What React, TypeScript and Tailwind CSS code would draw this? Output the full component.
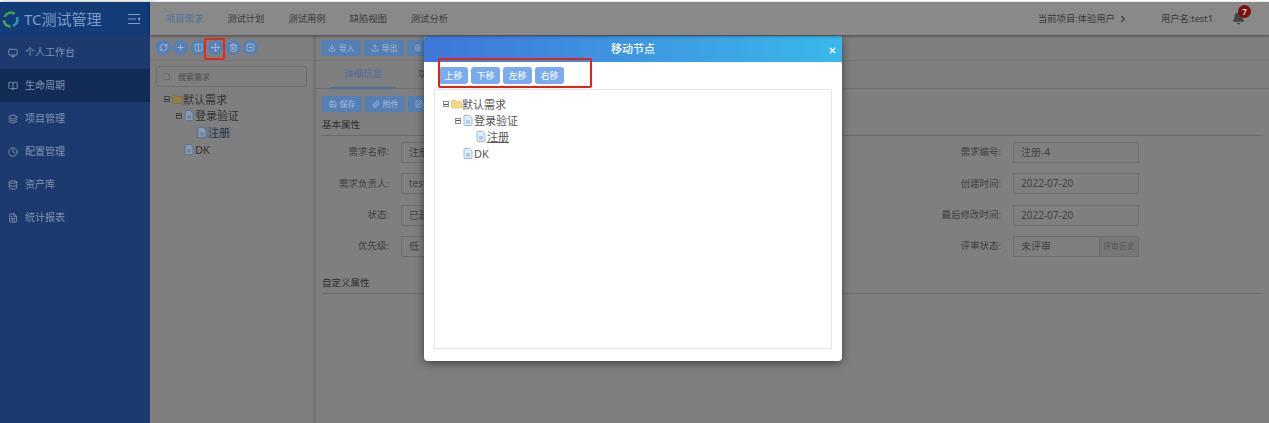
import { Monitor, BookOpen, Layers, Clock, Database, FileText, RefreshCw, Plus, Columns2, Move, Trash2, SquareArrowRight, Download, Upload, Settings, Search, Save, Paperclip, SquarePen, Bell, ChevronRight, X } from "lucide-react";
import type { ComponentType } from "react";

type IconType = ComponentType<{ size?: number; className?: string; strokeWidth?: number }>;

const menus: { label: string; icon: IconType; active?: boolean }[] = [
  { label: "个人工作台", icon: Monitor },
  { label: "生命周期", icon: BookOpen, active: true },
  { label: "项目管理", icon: Layers },
  { label: "配置管理", icon: Clock },
  { label: "资产库", icon: Database },
  { label: "统计报表", icon: FileText },
];

const navs = ["项目需求", "测试计划", "测试用例", "缺陷视图", "测试分析"];
const circles: IconType[] = [RefreshCw, Plus, Columns2, Move, Trash2, SquareArrowRight];

const rows = [
  ["需求名称:", "注册", "需求编号:", "注册-4"],
  ["需求负责人:", "test1", "创建时间:", "2022-07-20"],
  ["状态:", "已建立", "最后修改时间:", "2022-07-20"],
  ["优先级:", "低", "评审状态:", "未评审"],
];

function Logo() {
  return (
    <svg width="17" height="17" viewBox="0 0 20 20" fill="none" strokeWidth="3.2">
      <path d="M3 7 A8 8 0 0 1 15 3.5" stroke="#3f9a4e" />
      <path d="M17.5 7 A8 8 0 0 1 13 17.5" stroke="#2f8fb0" />
      <path d="M10 18 A8 8 0 0 1 2 11" stroke="#4aa35a" />
    </svg>
  );
}

function FolderIcon({ dim }: { dim?: boolean }) {
  return (
    <svg width="11" height="10" viewBox="0 0 11 10" className="shrink-0">
      <path d="M0.5 2 Q0.5 1 1.5 1 H4 L5 2.2 H9.5 Q10.5 2.2 10.5 3.2 V8 Q10.5 9 9.5 9 H1.5 Q0.5 9 0.5 8 Z" fill={dim ? "#8f8047" : "#f3d987"} stroke={dim ? "#6f6338" : "#d9b95c"} strokeWidth="0.6" />
    </svg>
  );
}

function FileIcon({ dim }: { dim?: boolean }) {
  return (
    <svg width="10" height="11" viewBox="0 0 10 11" className="shrink-0">
      <path d="M1 1.2 Q1 0.5 1.7 0.5 H6.5 L9 3 V9.8 Q9 10.5 8.3 10.5 H1.7 Q1 10.5 1 9.8 Z" fill={dim ? "#8b99ad" : "#e4eefb"} stroke={dim ? "#4d6f9e" : "#86aee2"} strokeWidth="0.8" />
      <path d="M3 6 H7 M3 7.8 H7" stroke={dim ? "#4d6f9e" : "#6d9bd8"} strokeWidth="0.8" />
    </svg>
  );
}

function Toggle({ dim }: { dim?: boolean }) {
  return (
    <span className={`flex h-[6px] w-[6px] shrink-0 items-center justify-center border ${dim ? "border-[#4a4a4a]" : "border-[#8a8f96] bg-[#eef1f5]"}`}>
      <span className={`h-px w-[4px] ${dim ? "bg-[#333]" : "bg-[#555]"}`} />
    </span>
  );
}

function Tree({ dim }: { dim?: boolean }) {
  const text = dim ? "text-[#333]" : "text-[#555]";
  const rowH = dim ? "h-[16.6px]" : "h-[16.4px]";
  return (
    <div className={`flex flex-col text-[11px] leading-none ${text}`}>
      <div className={`flex items-center ${rowH}`}>
        <Toggle dim={dim} />
        <span className="ml-[2px]"><FolderIcon dim={dim} /></span>
        <span>默认需求</span>
      </div>
      <div className={`ml-[12px] flex items-center ${rowH}`}>
        <Toggle dim={dim} />
        <span className="ml-[2px]"><FileIcon dim={dim} /></span>
        <span className="ml-px">登录验证</span>
      </div>
      <div className={`ml-[32px] flex items-center ${rowH}`}>
        <span className={`flex items-center gap-px px-px ${dim ? "bg-[#707a85]" : ""}`}>
          <FileIcon dim={dim} />
          <span className={dim ? "" : "underline"}>注册</span>
        </span>
      </div>
      <div className={`ml-[20px] flex items-center ${rowH}`}>
        <FileIcon dim={dim} />
        <span className="ml-px">DK</span>
      </div>
    </div>
  );
}

function ToolButton({ icon: Icon, label }: { icon: IconType; label: string }) {
  return (
    <button type="button" className="flex h-[16px] w-[40px] shrink-0 items-center justify-center gap-[3px] rounded-[2px] bg-[#5580b5] text-[8px] text-[#a8bcd6]">
      <Icon size={8} strokeWidth={2.2} />
      {label}
    </button>
  );
}

function Field({ value, extra }: { value: string; extra?: string }) {
  return (
    <div className="flex h-[21px] w-[126px] overflow-hidden rounded-[2px] border border-[#6c6c6c] text-[10px] text-[#444]">
      <span className="flex flex-1 items-center pl-[7px]">{value}</span>
      {extra && <span className="flex w-[39px] items-center justify-center border-l border-[#6c6c6c] bg-[#777] text-[8px] text-[#555]">{extra}</span>}
    </div>
  );
}

export default function App() {
  return (
    <div className="relative flex h-[423px] w-[1269px] flex-col overflow-hidden bg-white font-['Noto_Sans','Noto_Sans_CJK_SC',sans-serif]">
      <div className="h-[2px] shrink-0 bg-white" />
      <div className="flex min-h-0 flex-1">
        {/* 侧边栏 */}
        <aside className="flex w-[150px] shrink-0 flex-col bg-[#1c3a6e] shadow-[2px_0_4px_rgba(0,0,0,0.35)]">
          <div className="flex h-[34px] items-center bg-[#123b78] pl-[2px] pr-[10px]">
            <Logo />
            <span className="ml-[5px] flex-1 text-[15px] text-[#7f9cc4]">TC测试管理</span>
            <svg width="12" height="10" viewBox="0 0 12 10" stroke="#7f9cc4" strokeWidth="1" fill="none">
              <path d="M0 0.5 H12 M0 5 H8 M0 9.5 H12" />
              <path d="M12 3.5 L10 5 L12 6.5 Z" fill="#7f9cc4" />
            </svg>
          </div>
          {menus.map((m) => (
            <div key={m.label} className={`flex h-[33px] items-center gap-[7px] pl-[8px] text-[10px] text-[#7f93b2] ${m.active ? "bg-[#132c55]" : ""}`}>
              <m.icon size={10} strokeWidth={2.2} />
              <span>{m.label}</span>
            </div>
          ))}
        </aside>

        <div className="flex min-w-0 flex-1 flex-col bg-[#7f7f7f]">
          {/* 顶栏 */}
          <header className="z-10 flex h-[33px] shrink-0 items-center bg-[#898989] pl-[16px] pr-[24px] text-[9.3px] text-[#3a3a3a] shadow-[0_1px_3px_rgba(0,0,0,0.45)]">
            <nav className="flex gap-[24px]">
              {navs.map((n, i) => (
                <span key={n} className={i === 0 ? "text-[#4d6f9e]" : ""}>{n}</span>
              ))}
            </nav>
            <span className="ml-auto flex items-center">当前项目:体验用户<ChevronRight size={10} strokeWidth={3} className="ml-[3px]" /></span>
            <span className="ml-[33px]">用户名:test1</span>
            <span className="relative ml-[19px]">
              <Bell size={13} className="fill-[#444] text-[#444]" />
              <span className="absolute -right-[6px] -top-[7px] flex h-[13px] w-[13px] items-center justify-center rounded-full bg-[#7c0f10] text-[8px] font-bold text-[#ccc]">7</span>
            </span>
          </header>

          <div className="flex min-h-0 flex-1">
            {/* 需求树 */}
            <section className="w-[163px] shrink-0">
              <div className="flex h-[26px] items-center gap-[2.4px] border-b border-[#747474] pl-[6px]">
                {circles.map((Icon, i) => (
                  <span key={i} className="flex h-[15px] w-[15px] items-center justify-center rounded-full bg-[#5580b5] text-[#a8bcd6]">
                    <Icon size={9} strokeWidth={2.2} />
                  </span>
                ))}
              </div>
              <div className="mx-[6px] mt-[5px] flex h-[21px] items-center gap-[6px] rounded-[3px] border border-[#6e6e6e] pl-[5px] text-[8px] text-[#4a4a4a]">
                <Search size={10} className="text-[#666]" />
                搜索需求
              </div>
              <div className="mt-[4px] pl-[14px]">
                <Tree dim />
              </div>
            </section>

            <div className="w-[3px] shrink-0 bg-[#70737a]" />

            {/* 详情 */}
            <section className="min-w-0 flex-1">
              <div className="flex h-[26px] items-center gap-[3px] border-b border-[#747474] pl-[5px]">
                <ToolButton icon={Download} label="导入" />
                <ToolButton icon={Upload} label="导出" />
                <ToolButton icon={Settings} label="配置" />
              </div>
              <div className="flex h-[28px] border-b border-[#6e6e6e] pl-[14px] text-[9.5px] text-[#4d6f9e]">
                <span className="-mb-px flex w-[66px] items-center justify-center border-b-2 border-[#4d6f9e]">详细信息</span>
                <span className="ml-[22px] flex items-center text-[#444]">功能</span>
              </div>
              <div className="px-[6px] pt-[7px]">
                <div className="flex gap-[3px]">
                  <ToolButton icon={Save} label="保存" />
                  <ToolButton icon={Paperclip} label="附件" />
                  <ToolButton icon={SquarePen} label="修改" />
                </div>
                <h3 className="mt-[7px] flex h-[17px] items-center border-b border-[#6a6a6a] pb-[3px] text-[9.5px] text-[#2f2f2f]">基本属性</h3>
                <div className="mt-[6px] grid grid-cols-[67px_126px_462px_126px] gap-x-[12px] gap-y-[10.3px] text-[9.5px] text-[#3f3f3f]">
                  {rows.map((r, i) => (
                    <div key={r[2]} className="contents">
                      <span className="flex items-center justify-end whitespace-nowrap">{r[0]}</span>
                      <Field value={r[1]} />
                      <span className="flex items-center justify-end whitespace-nowrap">{r[2]}</span>
                      <Field value={r[3]} extra={i === 3 ? "评审历史" : undefined} />
                    </div>
                  ))}
                </div>
                <h3 className="mt-[20px] flex h-[17px] items-center border-b border-[#6a6a6a] pb-[3px] text-[9.5px] text-[#2f2f2f]">自定义属性</h3>
              </div>
            </section>
          </div>
        </div>
      </div>

      {/* 标注框 */}
      <div className="absolute left-[204px] top-[38px] h-[22px] w-[21px] rounded-[2px] border-2 border-[#e02a1f]" />

      {/* 移动节点弹窗 */}
      <div className="absolute left-[424px] top-[36px] flex h-[325px] w-[418px] flex-col overflow-hidden rounded-[4px] bg-white shadow-[0_2px_10px_rgba(0,0,0,0.5)]">
        <div className="relative flex h-[26px] shrink-0 items-center justify-center bg-gradient-to-r from-[#4076d8] to-[#38b8ea] text-[11px] font-medium text-white">
          移动节点
          <X size={9} strokeWidth={3.5} className="absolute right-[5px] top-[10px]" />
        </div>
        <div className="flex gap-[3px] pl-[15px] pt-[5px]">
          {["上移", "下移", "左移", "右移"].map((b) => (
            <button key={b} type="button" className="flex h-[17px] w-[29px] items-center justify-center rounded-[3px] bg-[#79abf0] text-[9px] text-white">{b}</button>
          ))}
        </div>
        <div className="mx-[10px] mt-[5px] h-[260px] border border-[#e6e6e6] pl-[8px] pt-[6px]">
          <Tree />
        </div>
      </div>
      <div className="absolute left-[438px] top-[58px] h-[30px] w-[154px] rounded-[2px] border-2 border-[#e8201a]" />
    </div>
  );
}
